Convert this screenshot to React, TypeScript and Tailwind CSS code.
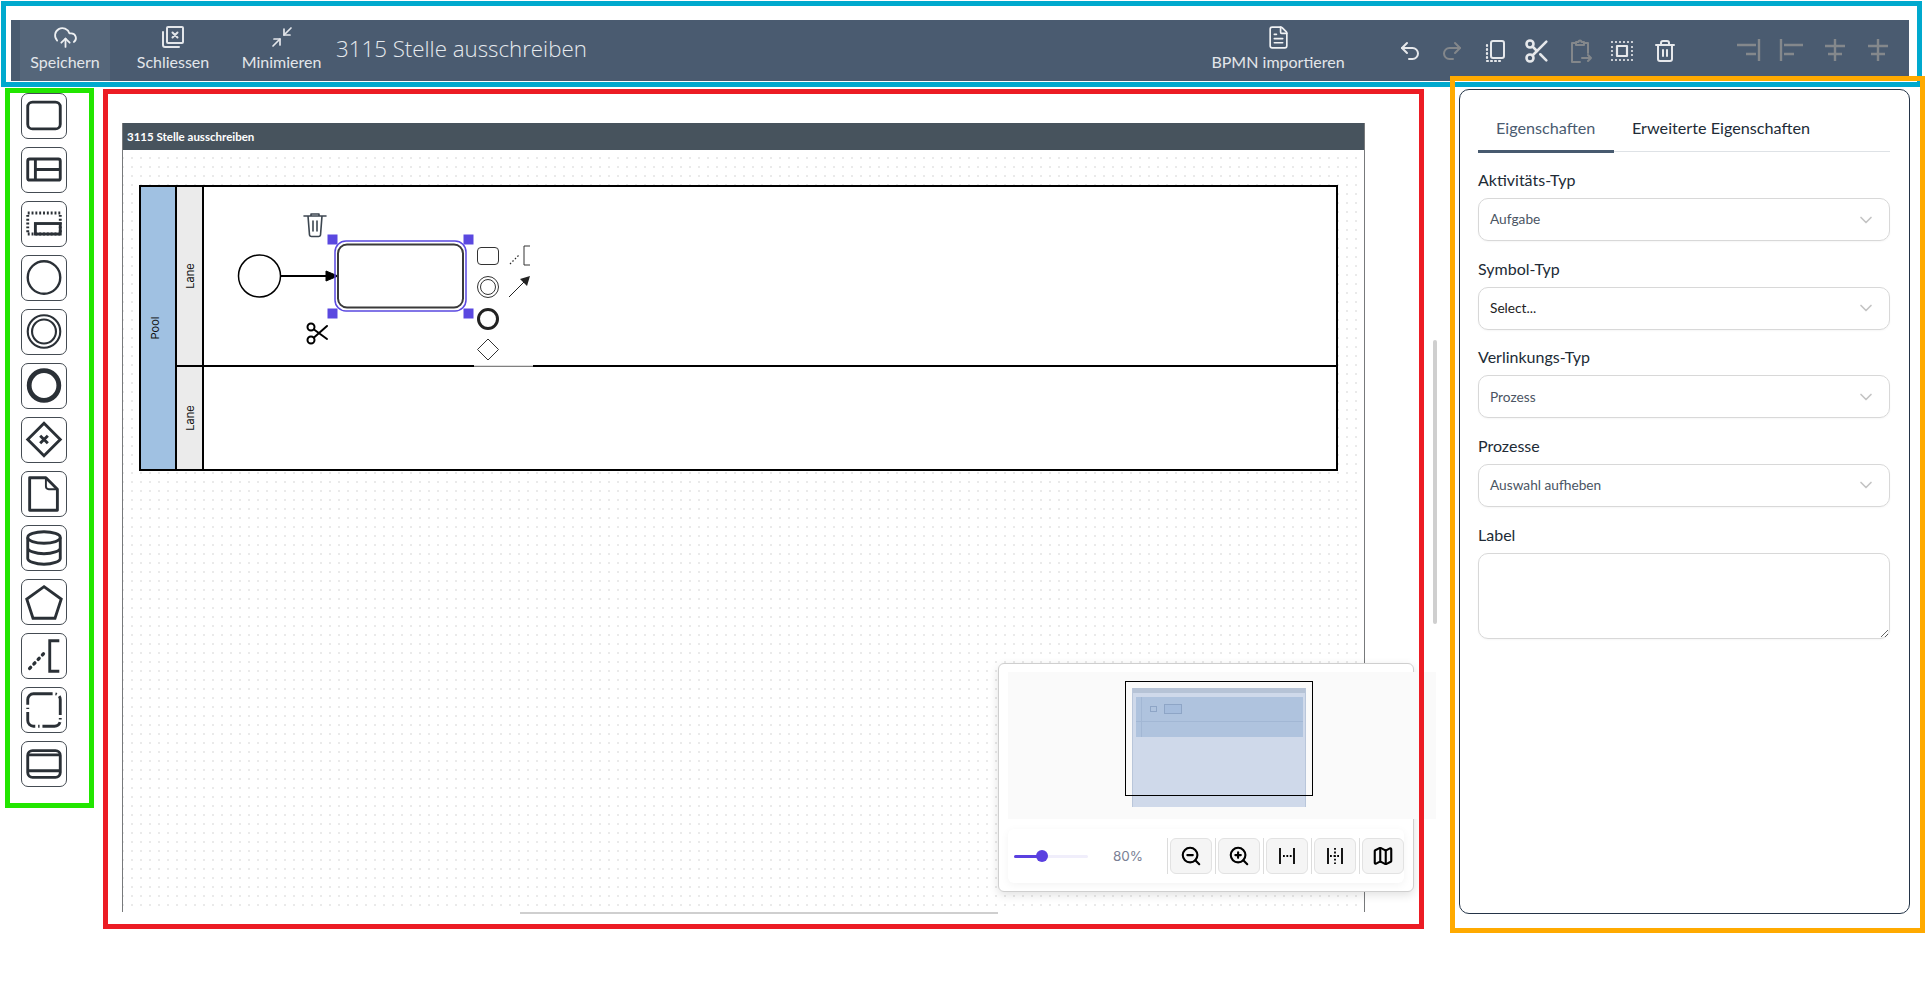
import { ChevronDown, CloudUpload, FileText, Map, Minimize2, Redo2, Scissors, Trash2, Undo2, ZoomIn, ZoomOut } from 'lucide-react';
import type { ReactNode } from 'react';

const ic = { fill: 'none', stroke: 'currentColor', strokeWidth: 2, strokeLinecap: 'round', strokeLinejoin: 'round' } as const;

function ToolbarButton({ label, icon, className }: { label: string; icon: ReactNode; className: string }) {
  return (
    <div className={`flex h-[61px] flex-col items-center pt-[5px] ${className}`}>
      <div className="flex h-[24px] items-center justify-center">{icon}</div>
      <span className="mt-[3px] text-[16px] leading-[20px] whitespace-nowrap text-[#e3e6ea]">{label}</span>
    </div>
  );
}

function Toolbar() {
  return (
    <div className="flex h-[61px] w-[1898px] items-start bg-[#4a5b70] font-['Lato',sans-serif]">
      <ToolbarButton
        className="ml-[9px] w-[90px] bg-[#55667a]"
        label="Speichern"
        icon={<CloudUpload size={25} strokeWidth={1.7} className="text-[#eef0f2]" />}
      />
      <ToolbarButton
        className="ml-[26px] w-[74px]"
        label="Schliessen"
        icon={
          <svg width="24" height="24" viewBox="0 0 24 24" {...ic} className="text-[#e3e6ea]">
            <rect x="6" y="2" width="16" height="16" rx="1" />
            <path d="M2 7v13a2 2 0 0 0 2 2h14" />
            <path d="m11.5 7.5 5 5m0-5-5 5" />
          </svg>
        }
      />
      <ToolbarButton
        className="ml-[33px] w-[77px]"
        label="Minimieren"
        icon={<Minimize2 size={24} strokeWidth={1.7} className="text-[#e3e6ea]" />}
      />
      <span className="ml-[16px] mt-[14px] w-[260px] font-['Open_Sans',sans-serif] text-[22.3px] font-light leading-[30px] whitespace-nowrap text-[#e6eaee]">
        3115 Stelle ausschreiben
      </span>
      <ToolbarButton
        className="ml-[616px] w-[132px]"
        label="BPMN importieren"
        icon={<FileText size={25} strokeWidth={1.6} className="text-[#f0f2f4]" />}
      />
      <div className="ml-[54px] mt-[17px] flex items-center text-[#e6e8eb]">
        <Undo2 size={24} strokeWidth={2} />
        <Redo2 size={24} strokeWidth={2} className="ml-[18px] text-[#83878b]" />
        <svg width="24" height="24" viewBox="0 0 24 24" {...ic} className="ml-[19px]">
          <rect x="8" y="2" width="13" height="17" rx="2" />
          <path d="M4 6v1M4 10v1M4 14v1M4 18v1M4 22h1M8 22h1M12 22h1M16 22h1" strokeWidth="2.2" />
        </svg>
        <Scissors size={28} strokeWidth={2.2} className="ml-[16px]" />
        <svg width="24" height="24" viewBox="0 0 24 24" {...ic} className="ml-[17px] text-[#83878b]">
          <path d="M7 4H4v19h8M17 4h3v10" />
          <path d="M8 6V3h2.5a1.5 1.5 0 0 1 3 0H16v3z" />
          <path d="M14 19h9m-3-3 3 3-3 3" />
        </svg>
        <svg width="24" height="24" viewBox="0 0 24 24" {...ic} className="ml-[18px]">
          <rect x="7" y="7" width="10" height="10" strokeWidth="2.2" />
          <path d="M2 3v0M6 3v0M10 3v0M14 3v0M18 3v0M22 3v0M2 8v0M22 8v0M2 12v0M22 12v0M2 16v0M22 16v0M2 21v0M6 21v0M10 21v0M14 21v0M18 21v0M22 21v0" strokeWidth="2.2" />
        </svg>
        <Trash2 size={24} strokeWidth={2} className="ml-[19px]" />
      </div>
      <div className="ml-[60px] mt-[18px] flex items-center text-[#84888c]">
        <svg width="24" height="24" viewBox="0 0 24 24" {...ic} strokeLinecap="butt" strokeWidth="2.4">
          <path d="M22 1v22M0 7h19M9 16h10" />
        </svg>
        <svg width="24" height="24" viewBox="0 0 24 24" {...ic} strokeLinecap="butt" strokeWidth="2.4" className="ml-[18px]">
          <path d="M2 1v22M5 7h19M5 16h10" />
        </svg>
        <svg width="24" height="24" viewBox="0 0 24 24" {...ic} strokeLinecap="butt" strokeWidth="2.4" className="ml-[20px]">
          <path d="M12 1v22M2 8h20M5 16h14" />
        </svg>
        <svg width="24" height="24" viewBox="0 0 24 24" {...ic} strokeLinecap="butt" strokeWidth="2.4" className="ml-[19px]">
          <path d="M12 1v22M2 8h20M5 16h14" />
        </svg>
      </div>
    </div>
  );
}

const paletteIcons: ReactNode[] = [
  <rect x="6" y="8.5" width="34" height="28" rx="5" />,
  <>
    <rect x="6" y="11.5" width="34" height="22" rx="2" />
    <path d="M14 11.5v22M14 22.5h26" />
  </>,
  <>
    <rect x="6" y="11.5" width="34" height="22" strokeDasharray="2 2" strokeLinecap="butt" />
    <rect x="14" y="22.5" width="26" height="11" strokeLinecap="butt" />
  </>,
  <circle cx="23" cy="22.5" r="17" strokeWidth="2.5" />,
  <>
    <circle cx="23" cy="22.5" r="17" strokeWidth="2.2" />
    <circle cx="23" cy="22.5" r="12.5" strokeWidth="2.2" />
  </>,
  <circle cx="23" cy="22.5" r="15.5" strokeWidth="5" />,
  <>
    <path d="M23 5.5 40 22.5 23 39.5 6 22.5z" />
    <path d="m19 18.500 8 8m0-8-8 8" />
  </>,
  <>
    <path d="M8 6h17l12 12v22H8z" strokeLinejoin="round" />
    <path d="M25 6v9a3 3 0 0 0 3 3h9" strokeWidth="2" />
  </>,
  <>
    <ellipse cx="23" cy="12" rx="17" ry="6" />
    <path d="M6 12v22c0 3 8 6 17 6s17-3 17-6V12M6 23c0 3 8 6 17 6s17-3 17-6" />
  </>,
  <path d="M23 7 41 20l-6.500 20h-23L5 20z" />,
  <>
    <path d="M8 36 24 19" strokeDasharray="1.500 5" strokeWidth="3.500" strokeLinecap="round" />
    <path d="M39 7H29v32h10" strokeLinecap="butt" />
  </>,
  <rect x="6" y="6" width="34" height="34" rx="6" strokeDasharray="20 3 1.500 3" strokeLinecap="butt" />,
  <>
    <rect x="6" y="9" width="34" height="28" rx="5" />
    <path d="M6 13.500h34M6 30h34" />
  </>,
];

function Palette() {
  return (
    <div className="ml-[21px] mt-[12px] flex w-[46px] shrink-0 flex-col gap-[8px]">
      {paletteIcons.map((icon, i) => (
        <div key={i} className="h-[46px] w-[46px] rounded-[7px] border border-[#444b52] bg-white">
          <svg width="44" height="44" viewBox="0 0 46 46" fill="none" stroke="#2a3036" strokeWidth="3">
            {icon}
          </svg>
        </div>
      ))}
    </div>
  );
}

function Diagram() {
  const handles: [number, number][] = [[332, 239], [468, 239], [332, 313], [468, 313]];
  return (
    <svg width="1241" height="762" viewBox="123 150 1241 762" className="absolute inset-0">
      <rect x="140" y="186" width="1197" height="284" fill="white" stroke="black" strokeWidth="2" />
      <rect x="140" y="186" width="36" height="284" fill="#a0c1e2" stroke="black" strokeWidth="2" />
      <rect x="176" y="186" width="27" height="180" fill="#ebebeb" stroke="black" strokeWidth="2" />
      <rect x="176" y="366" width="27" height="104" fill="#ebebeb" stroke="black" strokeWidth="2" />
      <path d="M203 366H1337" stroke="black" strokeWidth="2" />
      <g fontFamily="Inter, sans-serif" fontSize="11" fill="#111" textAnchor="middle">
        <text transform="translate(159 328) rotate(-90)">Pool</text>
        <text transform="translate(194 276) rotate(-90)">Lane</text>
        <text transform="translate(194 418) rotate(-90)">Lane</text>
      </g>

      <circle cx="259.500" cy="276" r="21" fill="white" stroke="black" strokeWidth="1.500" />
      <path d="M281 276h46" stroke="black" strokeWidth="2" />
      <path d="M326 271l12 5-12 5z" fill="black" stroke="black" />
      <rect x="335" y="241" width="131" height="70" rx="11" fill="none" stroke="#5a48e0" strokeWidth="1.500" />
      <rect x="338" y="244.500" width="125" height="63" rx="9" fill="white" stroke="#3a3a3a" strokeWidth="2" />
      {handles.map(([x, y]) => (
        <rect key={x + '-' + y} x={x - 4.500} y={y - 4.500} width="10" height="10" fill="#5a48e0" />
      ))}

      <g transform="translate(303 213)" fill="none" stroke="#3c4650" strokeWidth="1.600" strokeLinecap="round" strokeLinejoin="round">
        <path d="M1 3h22M5 3l1.500 19a2 2 0 0 0 2 1.500h7a2 2 0 0 0 2-1.500L19 3M8 3V1h8v2M10 8v10M14 8v10" />
      </g>
      <g transform="translate(306 322)" fill="none" stroke="black" strokeWidth="2" strokeLinecap="round">
        <circle cx="5" cy="5" r="3.500" />
        <circle cx="5" cy="18" r="3.500" />
        <path d="M8 7.500 21 17M8 15.500 21 4" />
      </g>

      <path d="M474 365.500H533" stroke="#bbb" />
      <path d="M474 366H533" stroke="white" strokeWidth="1" />
      <rect x="477.500" y="247.500" width="21" height="17" rx="3.500" fill="none" stroke="#333" strokeWidth="1" />
      <path d="M510 264 519 255" stroke="#222" strokeWidth="1.200" strokeDasharray="1.500 2" />
      <path d="M530 246h-6v19h6" fill="none" stroke="#333" />
      <circle cx="488" cy="287" r="10.500" fill="none" stroke="#333" />
      <circle cx="488" cy="287" r="7.500" fill="none" stroke="#333" />
      <path d="M509 297 524 282" stroke="#222" />
      <path d="M530 276l-10 3 7 7z" fill="#222" />
      <circle cx="488" cy="319" r="9.500" fill="none" stroke="#222" strokeWidth="3" />
      <path d="M488 339l10.500 10.500L488 360l-10.500-10.500z" fill="none" stroke="#333" />
    </svg>
  );
}

function ControlButton({ children }: { children: ReactNode }) {
  return (
    <>
      <div className="ml-[3px] h-[36px] w-px bg-[#dcdcdc]" />
      <div className="ml-[2px] flex h-[36px] w-[42px] items-center justify-center rounded-[6px] border border-[#e2e2e2] bg-[#f5f5f5] text-black">
        {children}
      </div>
    </>
  );
}

function Minimap() {
  return (
    <div className="absolute left-[891px] top-[575px] h-[229px] w-[416px] rounded-[6px] border border-[#cfcfcf] bg-white shadow-[0_3px_10px_rgba(0,0,0,0.12)]">
      <div className="absolute left-[9px] top-[8px] h-[147px] w-[428px] bg-[#fafafa]">
        <div className="absolute left-[124px] top-[16px] h-[119px] w-[174px] border-x border-[#b9c6da] bg-[#cfd9ea]">
          <div className="h-[5px] bg-[#b6c3d6]" />
          <div className="absolute left-[3px] top-[9px] h-[40px] w-[167px] bg-[#afc3de]">
            <div className="absolute bottom-[15px] left-0 h-px w-full bg-[#a2b7d4]" />
            <div className="absolute left-[5px] top-0 h-full w-px bg-[#a2b7d4]" />
            <div className="absolute left-[14px] top-[9px] h-[6px] w-[7px] border border-[#8ea5c6]" />
            <div className="absolute left-[28px] top-[7px] h-[10px] w-[18px] border border-[#8ea5c6] bg-[#a5bcdc]" />
          </div>
        </div>
        <div className="absolute left-[117px] top-[9px] h-[115px] w-[188px] border border-black" />
      </div>
      <div className="absolute left-[9px] top-[165px] flex h-[54px] w-[396px] items-center rounded-[6px] bg-white pl-[6px] shadow-[0_2px_8px_rgba(0,0,0,0.05)]">
        <div className="relative h-[3px] w-[78px] rounded bg-[#f0eefb]">
          <div className="h-full w-[28px] rounded bg-[#5a40e0]" />
          <div className="absolute left-[22px] top-[-5px] h-[12px] w-[12px] rounded-full bg-[#5a40e0]" />
        </div>
        <span className="ml-[25px] w-[29px] font-['Inter',sans-serif] text-[13.5px] text-[#7a7f95]">80%</span>
        <div className="ml-[22px] flex items-center">
          <ControlButton><ZoomOut size={22} strokeWidth={2.3} /></ControlButton>
          <ControlButton><ZoomIn size={22} strokeWidth={2.3} /></ControlButton>
          <ControlButton>
            <svg width="20" height="20" viewBox="0 0 20 20" fill="none" stroke="black" strokeWidth="1.800">
              <path d="M3 2v16M17 2v16" />
              <path d="M6 10h9" strokeDasharray="1.800 1.600" />
            </svg>
          </ControlButton>
          <ControlButton>
            <svg width="20" height="20" viewBox="0 0 20 20" fill="none" stroke="black" strokeWidth="1.800">
              <path d="M3 2v16M17 2v16" />
              <path d="M5 10h10M10 2v16" strokeDasharray="1.800 1.800" />
            </svg>
          </ControlButton>
          <ControlButton><Map size={22} strokeWidth={2.3} /></ControlButton>
        </div>
      </div>
    </div>
  );
}

function Canvas() {
  return (
    <div className="relative ml-[40px] mt-[7px] h-[826px] w-[1316px] shrink-0">
      <div className="absolute left-[15px] top-[35px] w-[1243px] border-x border-[#77797b]">
        <div className="flex h-[27px] items-center bg-[#47535d] pl-[4px] font-['Lato',sans-serif] text-[11.5px] font-bold text-white">
          3115 Stelle ausschreiben
        </div>
        <div className="relative h-[762px] bg-[radial-gradient(circle,#ababab_0.7px,transparent_1px)] bg-[length:9px_9px] bg-[position:-4.5px_3.5px]">
          <Diagram />
        </div>
      </div>
      <Minimap />
      <div className="absolute left-[1326px] top-[252px] h-[284px] w-[4px] rounded bg-[#cfcfcf]" />
      <div className="absolute left-[413px] top-[824px] h-[2px] w-[478px] bg-[#cfcfcf]" />
    </div>
  );
}

function Field({ label, value, dark }: { label: string; value: string; dark?: boolean }) {
  return (
    <div className="mb-[15.67px]">
      <div className="mb-[6px] h-[24px] text-[16px] leading-[24px] text-[#212b36]">{label}</div>
      <div className="flex h-[43px] items-center justify-between rounded-[10px] border border-[#d8d8d8] pl-[11px] pr-[13px] shadow-[0_1px_2px_rgba(0,0,0,0.04)]">
        <span className={`text-[13.7px] ${dark ? 'text-[#222]' : 'text-[#4b5563]'}`}>{value}</span>
        <ChevronDown size={20} strokeWidth={2} className="text-[#c4c4c4]" />
      </div>
    </div>
  );
}

function PropertiesPanel() {
  return (
    <div className="ml-[36px] mt-[8px] h-[825px] w-[451px] shrink-0 rounded-[10px] border border-[#243447] bg-white pl-[18px] pr-[19px] font-['Lato',sans-serif]">
      <div className="mt-[25px] flex h-[37px] border-b border-[#dee2e6]">
        <div className="h-[38px] w-[136px] border-b-[3px] border-[#475a6f] pl-[18px] text-[16.2px] leading-[26px] text-[#4a5b70]">Eigenschaften</div>
        <div className="ml-[18px] text-[16.2px] leading-[26px] text-[#212b36]">Erweiterte Eigenschaften</div>
      </div>
      <div className="mt-[16px]">
        <Field label="Aktivitäts-Typ" value="Aufgabe" />
        <Field label="Symbol-Typ" value="Select..." dark />
        <Field label="Verlinkungs-Typ" value="Prozess" />
        <Field label="Prozesse" value="Auswahl aufheben" />
        <div className="mb-[6px] h-[24px] text-[16px] leading-[24px] text-[#212b36]">Label</div>
        <textarea className="block h-[86px] w-full rounded-[10px] border border-[#d8d8d8] shadow-[0_1px_2px_rgba(0,0,0,0.04)]" />
      </div>
    </div>
  );
}

export default function App() {
  return (
    <div className="relative h-[981px] w-[1925px] overflow-hidden bg-white">
      <div className="pl-[11px] pt-[20px]">
        <Toolbar />
      </div>
      <div className="flex">
        <Palette />
        <Canvas />
        <PropertiesPanel />
      </div>

      {/* coloured frames drawn over the shot */}
      <div className="pointer-events-none absolute left-[1px] top-[1px] h-[86px] w-[1921px] border-[5px] border-[#00a9ce]" />
      <div className="pointer-events-none absolute left-[5px] top-[88px] h-[720px] w-[89px] border-[5px] border-[#22e600]" />
      <div className="pointer-events-none absolute left-[103px] top-[89px] h-[840px] w-[1321px] border-[5px] border-[#ec1c24]" />
      <div className="pointer-events-none absolute left-[1450px] top-[76px] h-[857px] w-[475px] border-[5px] border-[#ffaa00]" />
    </div>
  );
}
